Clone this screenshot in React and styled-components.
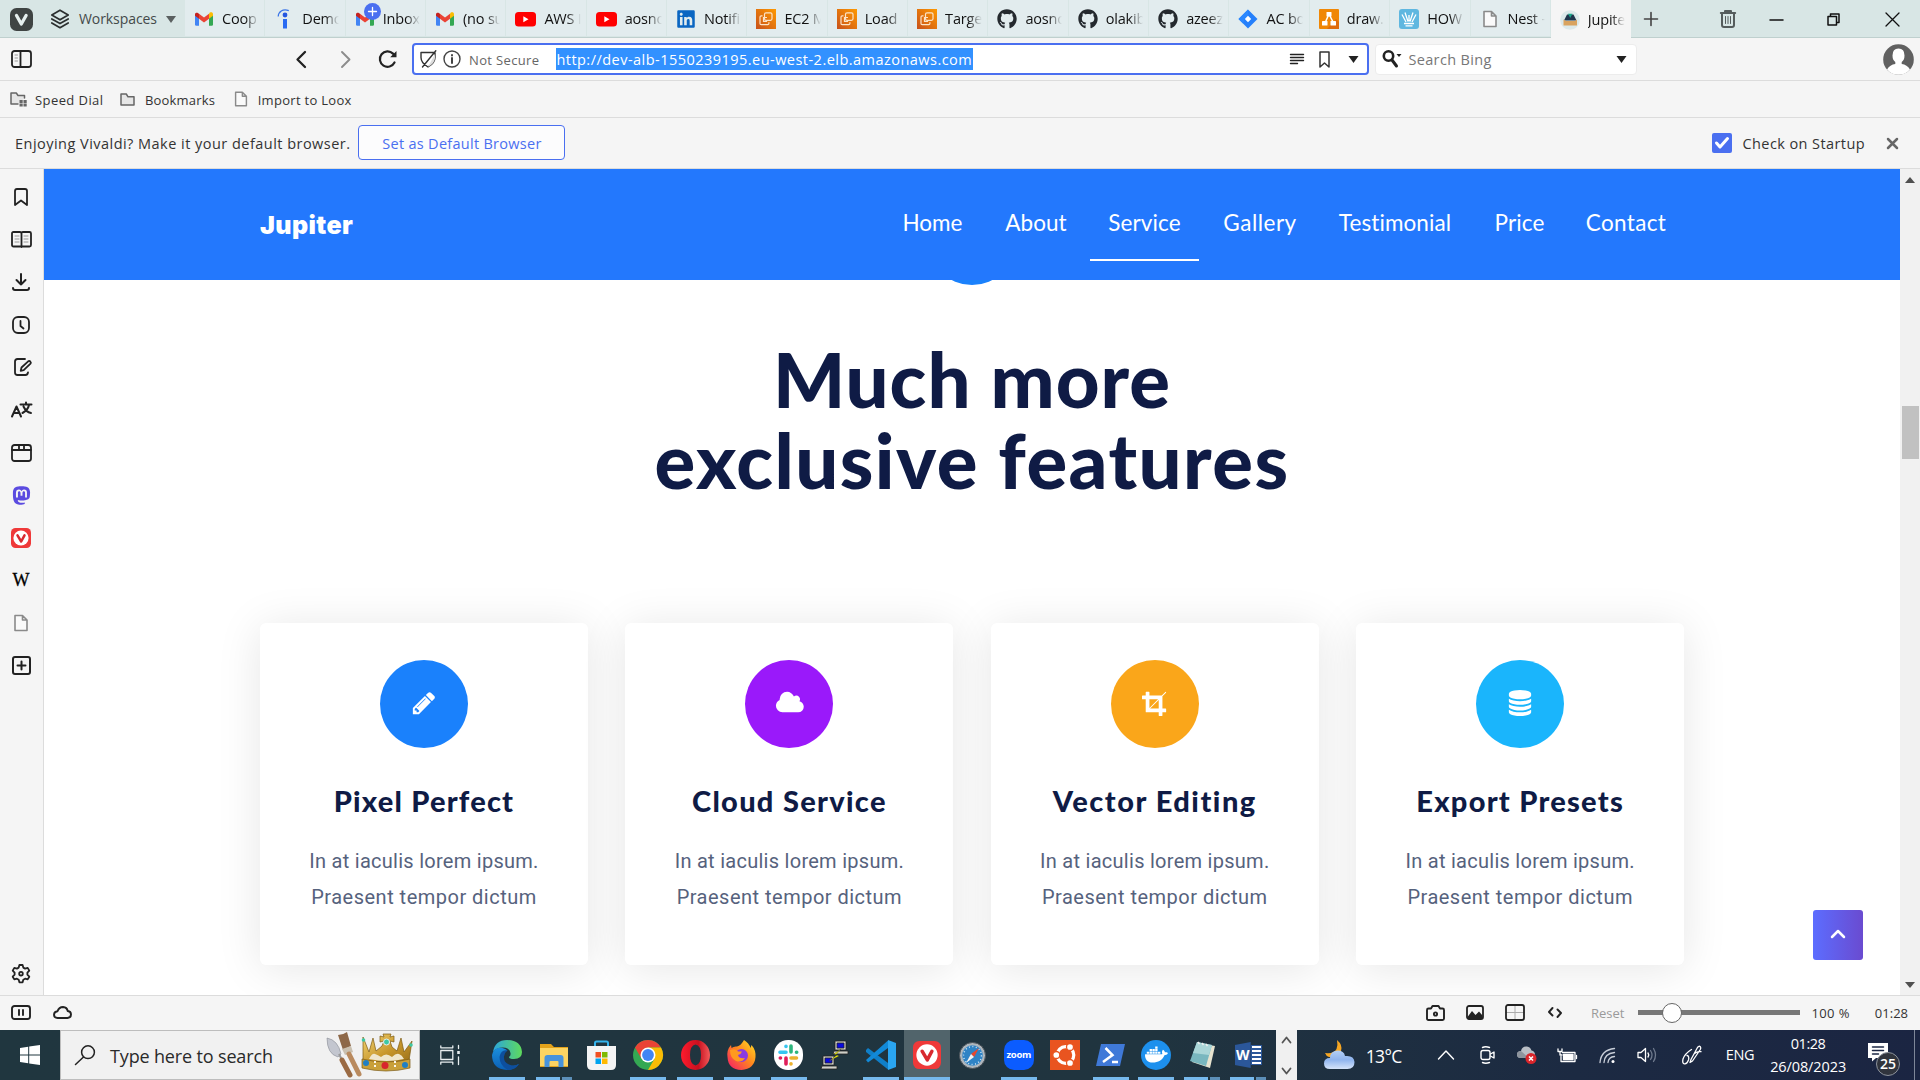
import React from 'react';
import styled, { createGlobalStyle, css } from 'styled-components';
import { FaGithub, FaDocker, FaMastodon, FaLinkedin } from 'react-icons/fa';

const UI = '"Open Sans", "Noto Sans", sans-serif';
const DISPLAY = 'Lato, "Open Sans", sans-serif';

const GlobalStyle = createGlobalStyle`
  * { box-sizing: border-box; }
  body { margin: 0; background: #f5f5f5; overflow: hidden; font-family: ${UI}; color: #2a2a2a; }
  svg { display: block; flex: none; overflow: visible; }
  h1, h2, p { margin: 0; }
`;

const Screen = styled.div`
  width: 1920px;
  height: 1080px;
  display: flex;
  flex-direction: column;
  overflow: hidden;
`;

const Label = styled.span`
  display: block;
  font-size: ${p => p.$size || 13}px;
  letter-spacing: ${p => p.$ls || 0}px;
  color: ${p => p.$color || '#333'};
  line-height: 20px;
  padding-top: ${p => p.$drop || 0}px;
  white-space: nowrap;
`;

const Svg = ({ w = 20, h, box = '0 0 20 20', stroke, sw = 1.8, children }) => (
  <svg width={w} height={h || w} viewBox={box} fill="none" stroke={stroke} strokeWidth={sw} strokeLinecap="round" strokeLinejoin="round">
    {children}
  </svg>
);

/* ---------- tab strip ---------- */
const TabStrip = styled.div`
  height: 38px;
  flex: none;
  display: flex;
  background: #d8e6e5;
  box-shadow: inset 0 -1px 0 #bfd0ce;
`;
const StripStart = styled.div`
  width: 185px;
  flex: none;
  display: flex;
  align-items: center;
  padding-left: 10px;
`;
const WorkspaceButton = styled.div`
  display: flex;
  align-items: center;
  gap: 9px;
  margin-left: 17px;
`;
const Tab = styled.div`
  width: 80.35px;
  flex: none;
  height: ${p => (p.$active ? 38 : 36)}px;
  padding: 1px 0 0 9px;
  display: flex;
  align-items: center;
  gap: 8px;
  background: ${p => (p.$active ? '#f5f5f5' : '#e2ecee')};
  border-right: 1px solid ${p => (p.$active ? '#f5f5f5' : '#d8e6e5')};
  position: relative;
`;
const TabTitle = styled.div`
  width: 37px;
  overflow: hidden;
  white-space: nowrap;
  font-size: 14.5px;
  line-height: 22px;
  letter-spacing: -0.2px;
  color: #111;
  mask-image: linear-gradient(90deg, #000 62%, transparent 100%);
`;
const TabBadge = styled.span`
  position: absolute;
  left: 18px;
  top: 3px;
  width: 17px;
  height: 17px;
  border-radius: 50%;
  background: #4a6ff0;
  display: flex;
  align-items: center;
  justify-content: center;
`;
const WindowButtons = styled.div`
  flex: 1;
  display: flex;
  align-items: center;
  padding: 0 19px 0 13px;
`;
const Push = styled.div`
  margin-left: ${p => p.$x}px;
`;

const Gmail = () => (
  <svg width="20" height="20" viewBox="0 0 20 20">
    <path d="M1 5.5v10c0 .8.5 1.2 1.2 1.2H5V8.5z" fill="#4285f4" />
    <path d="M19 5.5v10c0 .8-.5 1.2-1.2 1.2H15V8.5z" fill="#34a853" />
    <path d="M15 4.8v4.9l4-3v-1.500c0-2-2-2.400-3.200-1.600z" fill="#fbbc04" />
    <path d="M5 9.700V4.800l5 3.800 5-3.800v4.900l-5 3.800z" fill="#ea4335" />
    <path d="M1 5.200v1.500l4 3V4.800l-.8-.6C3 3.300 1 3.700 1 5.200z" fill="#c5221f" />
  </svg>
);
const Indeed = () => (
  <svg width="20" height="20" viewBox="0 0 20 20">
    <path d="M4.200 7.500C4.500 3 8.500-.6 14.800 1.600" stroke="#3b76e8" strokeWidth="1.300" fill="none" />
    <circle cx="11" cy="6" r="2.400" fill="#2557e0" />
    <path d="M9 10h4v9.500H9z" fill="#2a6bf2" />
  </svg>
);
const YouTube = () => (
  <svg width="21" height="20" viewBox="0 0 21 20">
    <rect x="0" y="3" width="21" height="14.500" rx="3.500" fill="#f00" />
    <path d="M8.300 7.200v6l5.200-3z" fill="#fff" />
  </svg>
);
const Ec2 = () => (
  <svg width="20" height="20" viewBox="0 0 20 20">
    <defs><linearGradient id="ec2" x1="0" y1="1" x2="1" y2="0"><stop stopColor="#c8511b" /><stop offset="1" stopColor="#f90" /></linearGradient></defs>
    <rect width="20" height="20" fill="url(#ec2)" />
    <rect x="8.500" y="3.800" width="7.500" height="7.500" rx="1.500" stroke="#fbe3c8" strokeWidth="1.200" fill="none" />
    <path d="M6.500 6.800H5.200q-1.200 0-1.200 1.200v6.500q0 1.200 1.200 1.200h6.500q1.200 0 1.200-1.200v-1.300M11 8.500H7.500v3.800h3.600" stroke="#fbe3c8" strokeWidth="1.200" fill="none" />
  </svg>
);
const Jira = () => (
  <svg width="20" height="20" viewBox="0 0 20 20">
    <path d="M10 .5 19.500 10 10 19.500.5 10z" fill="#2580fb" />
    <path d="M10 .5v6L6.700 10 5 14.500.5 10z" fill="#2b88ff" />
    <path d="M10 6.800 13.200 10 10 13.200 6.800 10z" fill="#fff" />
  </svg>
);
const Drawio = () => (
  <svg width="20" height="20" viewBox="0 0 20 20">
    <rect width="20" height="20" rx="1" fill="#f08705" />
    <path d="M8 20 17 10l3 3v7z" fill="#df6c0c" />
    <path d="M10 5 6 14M10 5l4.500 9" stroke="#fff" strokeWidth="1.500" />
    <rect x="7.500" y="3" width="5" height="4.500" rx=".6" fill="#fff" />
    <rect x="3" y="12" width="5.500" height="4.500" rx=".6" fill="#fff" />
    <rect x="11.500" y="12" width="5.500" height="4.500" rx=".6" fill="#fff" />
  </svg>
);
const HowTo = () => (
  <svg width="20" height="20" viewBox="0 0 20 20">
    <rect width="20" height="20" rx="3" fill="#5fb7e0" />
    <g stroke="#fff" strokeWidth="1.300" fill="none">
      <path d="M3 5.500 7 13M6 3.500l3 9M10 6v6.500M14 3.500l-3 9M17 5.500 13 13M5 14.500h10M6.500 16.800h7" />
    </g>
  </svg>
);
const PageIcon = ({ c = '#8a8a8a', s = 20 }) => (
  <Svg w={s} stroke={c} sw={1.6}><path d="M4 2.500h7.500L16 7v10.500H4zM11.500 2.500V7H16" fill="#fafafa" /></Svg>
);
const JupiterIcon = () => (
  <svg width="20" height="20" viewBox="0 0 20 20">
    <circle cx="10" cy="10" r="9.800" fill="#dce9ea" />
    <path d="M4 10.500 7 4.500h6.500l3 6z" fill="#20364d" />
    <path d="M8 3.800h4.500L10.200 8z" fill="#19a489" />
    <path d="M3.500 9.500 6 11h9l2-1.500v6H3.500z" fill="#d9a35f" />
  </svg>
);
const Git = () => <FaGithub size={20} color="#24292e" />;
const LinkedIn = () => <FaLinkedin size={20} color="#0a66c2" />;

const TABS = [
  ['Coop', Gmail], ['Demo', Indeed], ['Inbox', Gmail, true], ['(no su', Gmail], ['AWS I', YouTube], ['aosno', YouTube],
  ['Notifi', LinkedIn], ['EC2 M', Ec2], ['Load', Ec2], ['Targe', Ec2], ['aosno', Git], ['olakib', Git], ['azeez', Git],
  ['AC bo', Jira], ['draw.', Drawio], ['HOW', HowTo], ['Nest -', PageIcon], ['Jupite', JupiterIcon],
];

const Tabs = () => (
  <TabStrip>
    <StripStart>
      <svg width="23" height="23" viewBox="0 0 23 23">
        <rect width="23" height="23" rx="6.500" fill="#3f4443" />
        <path d="M6.500 7.500 11.300 16l4.800-8.500" stroke="#e6efee" strokeWidth="3.300" fill="none" strokeLinecap="round" strokeLinejoin="round" />
      </svg>
      <WorkspaceButton>
        <Svg w={20} stroke="#2b2f2f" sw={1.700}>
          <path d="M10 1.200 18.200 6 10 10.800 1.800 6zM1.800 10 10 14.600 18.200 10M1.800 14 10 18.700 18.200 14" />
        </Svg>
        <Label $size={14} $ls={-0.08} $color="#444a4a">Workspaces</Label>
        <svg width="10" height="7" viewBox="0 0 10 7"><path d="M0 0h10L5 7z" fill="#5a6060" /></svg>
      </WorkspaceButton>
    </StripStart>
    {TABS.map(([title, Icon, badge], i) => (
      <Tab key={i} $active={i === 17}>
        <Icon />
        <TabTitle>{title}</TabTitle>
        {badge && (
          <TabBadge>
            <Svg w={9} box="0 0 9 9" stroke="#fff" sw={1.300}><path d="M4.500.5v8M.5 4.500h8" /></Svg>
          </TabBadge>
        )}
      </Tab>
    ))}
    <WindowButtons>
      <Svg w={14} box="0 0 14 14" stroke="#444" sw={1.600}><path d="M7 .5v13M.5 7h13" /></Svg>
      <Push $x={62}>
        <Svg w={16} h={18} box="0 0 16 18" stroke="#555c5c" sw={1.500}>
          <path d="M.8 3h14.400M5 2.800V1h6v1.800M2 3.500V15q0 2 2 2h8q2 0 2-2V3.500" strokeWidth="2" /><path d="M5.500 6.500v7M8 6.500v7M10.500 6.500v7" strokeWidth="1" />
        </Svg>
      </Push>
      <Push $x={34}><Svg w={13} h={14} box="0 0 13 14" stroke="#111" sw={1.500}><path d="M0 8h13" /></Svg></Push>
      <Push $x={44}>
        <Svg w={13} box="0 0 13 13" stroke="#111" sw={1.500}><path d="M1 3.500h8.500V12H1zM3.500 3.500V1H12v8.500H9.500" /></Svg>
      </Push>
      <Push $x={46}><Svg w={13} box="0 0 13 13" stroke="#111" sw={1.300}><path d="m0 0 13 13M13 0 0 13" /></Svg></Push>
    </WindowButtons>
  </TabStrip>
);

/* ---------- address row ---------- */
const AddressRow = styled.div`
  height: 43px;
  flex: none;
  display: flex;
  align-items: center;
  padding: 0 6px 0 11px;
  border-bottom: 1px solid #dcdcdc;
  background: #f5f5f5;
`;
const UrlField = styled.div`
  width: 959px;
  height: 32px;
  margin-left: 14px;
  display: flex;
  align-items: center;
  background: #fff;
  border: 2px solid #4a6ff0;
  border-radius: 4px;
  padding: 0 8px 0 5px;
`;
const Url = styled.span`
  width: 417px;
  height: 22px;
  margin-left: 17px;
  background: #3291ff;
  color: #fff;
  font-size: 14.5px;
  line-height: 23px;
  letter-spacing: 0.47px;
  white-space: nowrap;
`;
const UrlActions = styled.div`
  margin-left: auto;
  display: flex;
  align-items: center;
  gap: 15px;
`;
const SearchField = styled.div`
  width: 262px;
  height: 31px;
  margin-left: 6px;
  display: flex;
  align-items: center;
  background: #fff;
  border: 1px solid #ececec;
  border-radius: 4px;
  padding: 0 9px 0 6px;
`;
const Down = ({ w = 11, h = 7, c = '#222' }) => (
  <svg width={w} height={h} viewBox="0 0 11 7"><path d="M.5 0h10L5.500 7z" fill={c} /></svg>
);

const Address = () => (
  <AddressRow>
    <Svg w={21} h={18} box="0 0 21 18" stroke="#222" sw={1.800}>
      <rect x="1" y="1" width="19" height="16" rx="2.500" /><path d="M9.500 1v16" /><path d="M4 5h2.500M4 8h2.500M4 11h2.500" stroke="#999" strokeWidth="1" />
    </Svg>
    <Push $x={264}><Svg w={10} h={17} box="0 0 10 17" stroke="#222" sw={2.300}><path d="M9 1 1.500 8.500 9 16" /></Svg></Push>
    <Push $x={35}><Svg w={10} h={17} box="0 0 10 17" stroke="#8c8c8c" sw={1.900}><path d="m1 1 7.500 7.500L1 16" /></Svg></Push>
    <Push $x={27}>
      <Svg w={20} stroke="#222" sw={2.200}><path d="M16.500 13.500A7.700 7.700 0 1 1 15 4.600l1.200 1.200" /><path d="M18.500 2v6.300h-6.300z" fill="#222" stroke="none" /></Svg>
    </Push>
    <UrlField>
      <Svg w={18} box="0 0 18 18" stroke="#333" sw={1.400}>
        <path d="M2 2.500h14v5q0 5.500-7 9.500-7-4-7-9.500zM16.800.8 3.500 17" /><path d="M16 4v4q0 5-7 9z" fill="#ddd" stroke="none" />
      </Svg>
      <Push $x={6}>
        <Svg w={18} box="0 0 18 18" stroke="#444" sw={1.400}><circle cx="9" cy="9" r="8" /><path d="M9 8v5M9 5v.4" strokeWidth="2" /></Svg>
      </Push>
      <Push $x={8}><Label $ls={0.35} $color="#666" $drop={1}>Not Secure</Label></Push>
      <Url>http://dev-alb-1550239195.eu-west-2.elb.amazonaws.com</Url>
      <UrlActions>
        <Svg w={14} h={12} box="0 0 14 12" stroke="#222" sw={1.400}><path d="M.5 1.500h13M.5 4.500h13M.5 7.500h13M.5 10.500h7" /></Svg>
        <Svg w={11} h={17} box="0 0 11 17" stroke="#333" sw={1.500}><path d="M1 1h9v15l-4.500-4L1 16z" /></Svg>
        <Push $x={3}><Down /></Push>
      </UrlActions>
    </UrlField>
    <SearchField>
      <Svg w={21} h={18} box="0 0 21 18" stroke="#222" sw={2.600}><circle cx="6.500" cy="6" r="4.700" /><path d="m10 10 4.500 6" strokeWidth="3" /><path d="M14.500 4h5L17 7z" fill="#222" stroke="none" /></Svg>
      <Push $x={5}><Label $size={14.5} $ls={0.35} $color="#777" $drop={2}>Search Bing</Label></Push>
      <UrlActions><Down /></UrlActions>
    </SearchField>
    <Push $x={246}>
      <svg width="31" height="31" viewBox="0 0 31 31">
        <circle cx="15.500" cy="15.500" r="15.300" fill="#606060" />
        <path d="M4 25.500q3-5 8.300-5.500V18q-2.800-2-2.800-6.500 0-7 6-7t6 7q0 4.500-2.800 6.500v2q5.300.500 8.300 5.500-4.500 5.300-11.500 5.300T4 25.500z" fill="#fff" />
      </svg>
    </Push>
  </AddressRow>
);

/* ---------- bookmarks & banner ---------- */
const BookmarkBar = styled.div`
  height: 37px;
  flex: none;
  display: flex;
  align-items: center;
  padding-left: 10px;
  border-bottom: 1px solid #dcdcdc;
  background: #f5f5f5;
`;
const Bookmark = styled.div`
  display: flex;
  align-items: center;
  gap: ${p => p.$gap}px;
  margin-right: 16.500px;
`;
const Banner = styled.div`
  height: 51px;
  flex: none;
  display: flex;
  align-items: center;
  padding: 0 22px 0 15px;
  border-bottom: 1px solid #dcdcdc;
  background: #f5f5f5;
`;
const DefaultButton = styled.div`
  width: 207px;
  height: 35px;
  margin-left: 8px;
  margin-top: -1px;
  border: 1px solid #4a6ff0;
  border-radius: 4px;
  background: #fcfcfd;
  display: flex;
  align-items: center;
  justify-content: center;
`;
const StartupOption = styled.div`
  margin-left: auto;
  display: flex;
  align-items: center;
  gap: 11px;
`;
const CheckBox = styled.div`
  width: 20px;
  height: 20px;
  border-radius: 2px;
  background: #4a6ff0;
  display: flex;
  align-items: center;
  justify-content: center;
`;
const folder = 'M1 3.500V13h13V4.800H8L6.300 2H1z';

const Bars = () => (
  <>
    <BookmarkBar>
      <Bookmark $gap={8}>
        <Svg w={17} h={16} box="0 0 17 16" stroke="#666" sw={1.500}><path d="M8 13H1V2h5.300L8 4.500h6.500V7" fill="#e6e6e6" /><path d="M11 10.500h.2M15 10.500h.2M11 14h.2M15 14h.2" strokeWidth="3" strokeLinecap="square" /></Svg>
        <Label $ls={0.42} $drop={1}>Speed Dial</Label>
      </Bookmark>
      <Bookmark $gap={9}>
        <Svg w={16} h={15} box="0 0 16 15" stroke="#666" sw={1.500}><path d={folder} fill="#e6e6e6" /></Svg>
        <Label $ls={0.19} $drop={1}>Bookmarks</Label>
      </Bookmark>
      <Bookmark $gap={8}><PageIcon s={18} /><Label $ls={0.3} $drop={1}>Import to Loox</Label></Bookmark>
    </BookmarkBar>
    <Banner>
      <Label $size={14.5} $ls={0.47} $drop={2}>Enjoying Vivaldi? Make it your default browser.</Label>
      <DefaultButton><Label $size={14.5} $ls={0.28} $color="#4a6ff0" $drop={2}>Set as Default Browser</Label></DefaultButton>
      <StartupOption>
        <CheckBox><Svg w={14} h={12} box="0 0 14 12" stroke="#fff" sw={3}><path d="m1.500 6 3.500 4L12.500 1.500" /></Svg></CheckBox>
        <Label $size={14.5} $ls={0.41} $drop={2}>Check on Startup</Label>
        <Push $x={11}><Svg w={11} box="0 0 11 11" stroke="#666" sw={2.500}><path d="m1 1 9 9M10 1l-9 9" /></Svg></Push>
      </StartupOption>
    </Banner>
  </>
);

/* ---------- side panel ---------- */
const Middle = styled.div`
  height: 827px;
  flex: none;
  display: flex;
  border-bottom: 1px solid #dcdcdc;
`;
const Panel = styled.div`
  width: 44px;
  flex: none;
  background: #f5f5f5;
  border-right: 1px solid #dcdcdc;
  display: flex;
  flex-direction: column;
  align-items: center;
  padding: 7px 1px 0 0;
`;
const PanelSlot = styled.div`
  height: 42.600px;
  display: flex;
  align-items: center;
  margin-top: ${p => (p.$last ? 'auto' : '0')};
`;
const WikiMark = styled.span`
  font: 18px "Liberation Serif", serif;
  color: #000;
  -webkit-text-stroke: 0.3px #000;
`;
const VivaldiLogo = ({ s }) => (
  <svg width={s} height={s} viewBox="0 0 20 20">
    <rect width="20" height="20" rx="4.500" fill="#ef3939" />
    <circle cx="10" cy="10" r="7.600" fill="#fff" />
    <path d="m6.500 7.300 3.700 6.200 3.300-6.200" stroke="#d8292f" strokeWidth="2.500" fill="none" strokeLinecap="round" strokeLinejoin="round" />
  </svg>
);
const K = '#222';
const PANEL = [
  <Svg w={14} h={18} box="0 0 14 18" stroke={K}><path d="M1 17V3q0-2 2-2h8q2 0 2 2v14l-6-4.500z" /></Svg>,
  <Svg w={21} h={17} box="0 0 21 17" stroke={K}><path d="M1 2.500Q1 1 2.500 1h6.500q1.500 0 1.500 1.500Q10.500 1 12 1h6.500Q20 1 20 2.500V14q0 1.500-1.500 1.500H2.500Q1 15.500 1 14zM10.500 2.500V16" /><path d="M4 5h4M4 8h4M4 11h4M13 5h4M13 8h4M13 11h4" stroke="#999" strokeWidth="1" /></Svg>,
  <Svg w={18} h={18} box="0 0 18 18" stroke={K} sw={2}><path d="M9 1v10.500M4.500 7 9 11.500 13.500 7M1 15q0 2 2 2h12q2 0 2-2" /></Svg>,
  <Svg w={18} box="0 0 18 18" stroke={K}><rect x="1" y="1" width="16" height="16" rx="5" /><path d="M8.500 5v5l3 2.500" /></Svg>,
  <Push $x={4}><Svg w={18} h={19} box="0 0 18 19" stroke={K}><path d="M11 1H3.500Q1 1 1 3.500v11Q1 17 3.500 17h8q2 0 2.500-2.500" /><path d="m7.500 9.500 6.700-6.200q1-.8 2.100.2 1.100 1.200.2 2.200l-6.800 6.500-3 .7z" /></Svg></Push>,
  <Svg w={21} h={16} box="0 0 21 16" stroke={K} sw={2}><path d="M1 14.500 5.500 4.500l4.500 10M2.800 11h5.500M9.500 2.500h11M15 .5v2M18 3q-1 5-6.500 8M12.500 4.500Q15 10 20 11" /></Svg>,
  <Svg w={21} h={18} box="0 0 21 18" stroke={K}><rect x="1" y="1" width="19" height="16" rx="2.500" /><path d="M1 6h19M8 1.500V5M13 1.500V5" /></Svg>,
  <FaMastodon size={21} color="#5b4be0" />,
  <VivaldiLogo s={20} />,
  <WikiMark>W</WikiMark>,
  <PageIcon s={20} />,
  <Svg w={19} box="0 0 19 19" stroke={K} sw={2}><rect x="1" y="1" width="17" height="17" rx="2" /><path d="M9.500 5.500v8M5.500 9.500h8" /></Svg>,
];

const SidePanel = () => (
  <Panel>
    {PANEL.map((icon, i) => <PanelSlot key={i}>{icon}</PanelSlot>)}
    <PanelSlot $last>
      <Svg w={20} stroke={K}>
        <path d="M8.400 1h3.200l.7 2.600 1.800 1 2.600-.7 1.600 2.700-1.900 2v2.100l1.900 2-1.600 2.700-2.600-.7-1.800 1-.7 2.600H8.400l-.7-2.600-1.800-1-2.600.7-1.600-2.700 1.900-2V8.600l-1.900-2 1.600-2.700 2.600.7 1.800-1z" />
        <circle cx="10" cy="9.700" r="1.800" />
      </Svg>
    </PanelSlot>
  </Panel>
);

/* ---------- web page ---------- */
const Page = styled.main`
  width: 1856px;
  flex: none;
  background: #fff;
  display: flex;
  flex-direction: column;
  overflow: hidden;
  position: relative;
`;
const SiteHeader = styled.header`
  height: 111px;
  flex: none;
  background: #2378fd;
  display: flex;
  align-items: center;
  padding: 0 218px 0 216px;
  position: relative;
  z-index: 1;
`;
const Brand = styled.div`
  font: 900 25px Inter, Roboto, sans-serif;
  letter-spacing: 0.4px;
  color: #fff;
`;
const Nav = styled.nav`
  margin-left: auto;
  height: 92px;
  align-self: flex-start;
  display: flex;
`;
const NavItem = styled.a`
  width: ${p => p.$w}px;
  display: flex;
  align-items: center;
  justify-content: center;
  padding-top: 16px;
  border-bottom: 2px solid ${p => (p.$active ? '#fff' : 'transparent')};
  font: 22.500px ${DISPLAY};
  letter-spacing: ${p => p.$ls}px;
  color: #fff;
`;
const NAV = [['Home', 99, 0.0], ['About', 108, 0.05], ['Service', 109, 0.1], ['Gallery', 122, 0.5], ['Testimonial', 148, 0.1], ['Price', 101, 0.1], ['Contact', 112, 0.35]];
const Orb = styled.div`
  width: 88px;
  height: 88px;
  flex: none;
  border-radius: 50%;
  background: #1a81fc;
  margin: -83px auto 0;
`;
const Heading = styled.h1`
  margin-top: 53px;
  text-align: center;
  font: 900 76px/81px ${DISPLAY};
  color: #0f1b45;
`;
const HeadingLine = styled.span`
  display: block;
  letter-spacing: ${p => p.$ls}px;
`;
const Cards = styled.section`
  display: grid;
  grid-template-columns: repeat(4, 328px);
  column-gap: 37.400px;
  margin: 123px 0 0 216px;
`;
const Card = styled.article`
  height: 342px;
  border-radius: 6px;
  background: #fff;
  box-shadow: 0 4px 45px rgba(0, 0, 0, 0.1);
  display: flex;
  flex-direction: column;
  align-items: center;
  padding-top: 37px;
`;
const Round = styled.div`
  width: 88px;
  height: 88px;
  border-radius: 50%;
  background: ${p => p.$bg};
  display: flex;
  align-items: center;
  justify-content: center;
  padding-bottom: 2px;
`;
const CardTitle = styled.h2`
  margin-top: 35px;
  font: 900 29px/36px ${DISPLAY};
  letter-spacing: ${p => p.$ls}px;
  color: #0f1b45;
  white-space: nowrap;
`;
const CardText = styled.p`
  font: 20px/36px Roboto, sans-serif;
  letter-spacing: ${p => p.$ls}px;
  color: #56627d;
  margin-top: ${p => p.$top || 0}px;
  white-space: nowrap;
`;
const CARDS = [
  ['Pixel Perfect', 1.2, '#1a81fc', '0 0 1792 1792', 26, 'M491 1536l91-91-235-235-91 91v107h128v128h107zm523-928q0-22-22-22-10 0-17 7l-542 542q-7 7-7 17 0 22 22 22 10 0 17-7l542-542q7-7 7-17zm-54-192l416 416-832 832h-416v-416zm683 96q0 53-37 90l-166 166-416-416 166-165q36-38 90-38 53 0 91 38l235 234q37 39 37 91z'],
  ['Cloud Service', 1.3, '#9a19fa', '0 0 2048 1792', 29.7, 'M1984 1152q0 159-112.500 271.500t-271.500 112.500h-1088q-185 0-316.500-131.500t-131.500-316.500q0-132 71-241.500t187-163.500q-2-28-2-43 0-212 150-362t362-150q158 0 286.500 88t187.500 230q70-62 166-62 106 0 181 75t75 181q0 75-41 138 129 30 213 134.500t84 239.500z'],
  ['Vector Editing', 1.5, '#faa61a', '0 0 1792 1792', 26, 'M557 1280h595v-595zm-45-45l595-595h-595v595zm1152 77v192q0 14-9 23t-23 9h-224v224q0 14-9 23t-23 9h-192q-14 0-23-9t-9-23v-224h-864q-14 0-23-9t-9-23v-864h-224q-14 0-23-9t-9-23v-192q0-14 9-23t23-9h224v-224q0-14 9-23t23-9h192q14 0 23 9t9 23v224h851l246-247q10-9 23-9t23 9q9 10 9 23t-9 23l-247 246v851h224q14 0 23 9t9 23z'],
  ['Export Presets', 1.25, '#1ab5fc', '0 0 1792 1792', 26, 'M896 768q237 0 443-43t325-127v170q0 69-103 128t-280 93.500-385 34.500-385-34.500-280-93.500-103-128v-170q119 84 325 127t443 43zm0 768q237 0 443-43t325-127v170q0 69-103 128t-280 93.500-385 34.500-385-34.500-280-93.500-103-128v-170q119 84 325 127t443 43zm0-384q237 0 443-43t325-127v170q0 69-103 128t-280 93.500-385 34.500-385-34.500-280-93.500-103-128v-170q119 84 325 127t443 43zm0-1152q208 0 385 34.500t280 93.500 103 128v128q0 69-103 128t-280 93.500-385 34.500-385-34.500-280-93.500-103-128v-128q0-69 103-128t280-93.500 385-34.500z'],
];
const ToTop = styled.div`
  position: absolute;
  right: 37px;
  bottom: 35px;
  width: 50px;
  height: 50px;
  border-radius: 3px;
  background: linear-gradient(90deg, #5c6dff, #6a4bd0);
  display: flex;
  align-items: center;
  justify-content: center;
  padding-bottom: 4px;
`;
const ScrollTrack = styled.div`
  width: 20px;
  flex: none;
  background: #f1f1f1;
  display: flex;
  flex-direction: column;
  align-items: center;
  padding: 8px 0 7px;
`;
const ScrollThumb = styled.div`
  width: 17px;
  height: 53px;
  margin: 223px 0 auto;
  background: #c1c1c1;
`;

const WebPage = () => (
  <Page>
    <SiteHeader>
      <Brand>Jupiter</Brand>
      <Nav>{NAV.map(([t, w, ls]) => <NavItem key={t} $w={w} $ls={ls} $active={t === 'Service'}>{t}</NavItem>)}</Nav>
    </SiteHeader>
    <Orb />
    <Heading>
      <HeadingLine $ls={1}>Much more</HeadingLine>
      <HeadingLine $ls={1.45}>exclusive features</HeadingLine>
    </Heading>
    <Cards>
      {CARDS.map(([title, ls, bg, box, w, d]) => (
        <Card key={title}>
          <Round $bg={bg}><svg width={w} height="26" viewBox={box}><path d={d} fill="#fff" /></svg></Round>
          <CardTitle $ls={ls}>{title}</CardTitle>
          <CardText $top={24} $ls={0.27}>In at iaculis lorem ipsum.</CardText>
          <CardText $ls={0.49}>Praesent tempor dictum</CardText>
        </Card>
      ))}
    </Cards>
    <ToTop><Svg w={14} h={9} box="0 0 14 9" stroke="#fff" sw={2.500}><path d="m1 8 6-6 6 6" /></Svg></ToTop>
  </Page>
);

/* ---------- status bar ---------- */
const StatusBar = styled.div`
  height: 34px;
  flex: none;
  display: flex;
  align-items: center;
  padding: 0 12px 1px 11px;
  background: #f5f5f5;
`;
const StatusRight = styled.div`
  margin-left: auto;
  display: flex;
  align-items: center;
`;
const Slider = styled.div`
  width: 162px;
  height: 20px;
  margin: 0 11px 0 14px;
  padding-left: 24px;
  display: flex;
  align-items: center;
  background: linear-gradient(#777, #777) center / 100% 5px no-repeat;
  border-radius: 3px;
`;
const Knob = styled.div`
  width: 20px;
  height: 20px;
  border-radius: 50%;
  border: 1px solid #666;
  background: #fff;
`;
const Status = () => (
  <StatusBar>
    <Svg w={20} h={15} box="0 0 20 15" stroke={K} sw={1.900}><rect x="1" y="1" width="18" height="13" rx="2.500" /><path d="M8 5v5M12 5v5" /></Svg>
    <Push $x={22}><Svg w={19} h={13} box="0 0 19 13" stroke={K} sw={1.900}><path d="M4.500 12Q1 12 1 8.700 1.200 5.500 4.500 5.200 6 1 10 1q4 .2 4.700 4 3.300.4 3.300 3.500T14.500 12z" /></Svg></Push>
    <StatusRight>
      <Svg w={19} h={16} box="0 0 19 16" stroke={K} sw={1.900}><path d="M1 5q0-1.500 1.500-1.500H5L6.500 1h6L14 3.500h2.500Q18 3.500 18 5v8.500q0 1.500-1.500 1.500h-14Q1 15 1 13.500z" /><circle cx="9.500" cy="9" r="1.600" /></Svg>
      <Push $x={21}><Svg w={18} h={15} box="0 0 18 15" stroke={K}><rect x="1" y="1" width="16" height="13" rx="2" /><path d="M1.500 12 6 6l3.500 4L13 6.500l3.500 4V13H2z" fill={K} stroke="none" /></Svg></Push>
      <Push $x={21}><Svg w={20} h={17} box="0 0 20 17" stroke={K}><path d="M10 1v15M1 8.500h18" stroke="#aaa" strokeWidth="1" /><rect x="1" y="1" width="18" height="15" rx="2" /></Svg></Push>
      <Push $x={23}><Svg w={14} h={11} box="0 0 14 11" stroke={K} sw={1.900}><path d="M4.500 1 1 5l3.500 3.500M9.500 2.500 13 6l-3.500 4" /></Svg></Push>
      <Push $x={29}><Label $color="#9a9a9a">Reset</Label></Push>
      <Slider><Knob /></Slider>
      <Label $ls={0.39}>100 %</Label>
      <Push $x={25}><Label>01:28</Label></Push>
    </StatusRight>
  </StatusBar>
);

/* ---------- taskbar ---------- */
const TaskBar = styled.div`
  height: 50px;
  flex: none;
  display: flex;
  background: linear-gradient(90deg, #20363f 0%, #20343f 60%, #1c2a42 82%, #1b2542 100%);
`;
const StartCell = styled.div`
  width: 60px;
  flex: none;
  display: flex;
  align-items: center;
  justify-content: center;
`;
const SearchBox = styled.div`
  width: 360px;
  flex: none;
  display: flex;
  align-items: center;
  padding-left: 14px;
  background: #f1f1f1;
  border: 1px solid #bdbdbd;
`;
const TaskViewCell = styled(StartCell)`
  width: 64px;
  padding-right: 5px;
`;
const AppCell = styled.div`
  width: ${p => p.$w}px;
  flex: none;
  display: flex;
  flex-direction: column;
  align-items: center;
  justify-content: flex-end;
  gap: 5px;
  ${p => p.$active && css`background: #51646b;`}
`;
const IconBox = styled.div`
  height: 34px;
  display: flex;
  align-items: center;
`;
const RunBar = styled.div`
  height: 3px;
  width: ${p => (p.$wide ? 45.900 : 36)}px;
  background: ${p => (p.$multi ? 'linear-gradient(90deg,#76b9ed 68%,#20343f 68%,#20343f 71%,#5c8fb8 71%)' : '#76b9ed')};
  visibility: ${p => (p.$on ? 'visible' : 'hidden')};
`;
const ScrollButtons = styled.div`
  width: 21px;
  flex: none;
  margin-left: 4.500px;
  background: #f0f0f0;
  display: flex;
  flex-direction: column;
  align-items: center;
  justify-content: space-between;
  padding: 7px 0 6px;
`;
const Tray = styled.div`
  flex: 1;
  display: flex;
  align-items: center;
  padding-left: 27px;
`;
const Clock = styled.div`
  width: 76px;
  margin-left: 16px;
  display: flex;
  flex-direction: column;
  align-items: center;
  gap: 3px;
`;
const Notice = styled.div`
  width: 33px;
  height: 36px;
  margin-left: 22px;
  margin-top: 8px;
  position: relative;
`;
const Count = styled.span`
  position: absolute;
  left: 8px;
  top: 11px;
  width: 24px;
  height: 24px;
  border-radius: 50%;
  border: 1px solid #8c929c;
  background: #30343d;
  color: #fff;
  font: 600 14px/21px ${UI};
  text-align: center;
`;
const ShowDesktop = styled.div`
  width: 6px;
  margin-left: auto;
  align-self: stretch;
  border-left: 1px solid #7e8798;
`;
const ZoomText = styled.span`
  font: bold 9.500px ${UI};
  letter-spacing: -0.3px;
  color: #fff;
`;
const ZoomTile = styled.div`
  width: 30px;
  height: 30px;
  border-radius: 10px;
  background: #0b5cff;
  display: flex;
  align-items: center;
  justify-content: center;
  padding-bottom: 2px;
`;
const DockerTile = styled(ZoomTile)`
  border-radius: 50%;
  background: #1d90ed;
`;

const Edge = () => (
  <svg width="30" height="30" viewBox="0 0 30 30">
    <defs>
      <linearGradient id="eg1" x1="0" y1="0" x2="1" y2="0"><stop stopColor="#2ba5dc" /><stop offset="1" stopColor="#5fdb5c" /></linearGradient>
      <linearGradient id="eg2" x1="0" y1="0" x2="0" y2="1"><stop stopColor="#1b8fdc" /><stop offset="1" stopColor="#0b5fb5" /></linearGradient>
    </defs>
    <path d="M1 12Q3 0 15 0q14 0 15 12 0 7-8 7-5 0-5-2 2-1 1.500-4Q17.500 7.500 11 7.500 4 7.500 1 12z" fill="url(#eg1)" />
    <path d="M1 12Q4 7 10.500 8q3 .5 5 2.500-5 1-5 7 .5 8 9 8.500 5 0 7.500-2-5 6-12 6Q0 29 0 15z" fill="url(#eg2)" />
    <path d="M15.500 10.500Q9 9 7.500 17q0 8 8 13 8 0 11.500-6-5 2.500-10 .5-5.500-2.500-5-8 .5-4 3.500-6z" fill="#0d4f9e" />
  </svg>
);
const Explorer = () => (
  <svg width="28" height="26" viewBox="0 0 28 26">
    <path d="M0 2h11l3 3h14v20H0z" fill="#e3a21a" /><path d="M0 6h28v18H0z" fill="#fcd462" />
    <path d="M4.500 25V16q0-3 3-3h13q3 0 3 3v9h-5v-5q0-1-1-1h-7q-1 0-1 1v5z" fill="#4793dc" />
  </svg>
);
const Store = () => (
  <svg width="29" height="29" viewBox="0 0 29 29">
    <path d="M8 7V2q0-1.500 1.500-1.500h10Q21 .5 21 2v5" stroke="#34b3ec" strokeWidth="2" fill="none" />
    <path d="M0 5h29v19q0 5-5 5H5q-5 0-5-5z" fill="#f4f4f4" />
    <path d="M8.500 11h5.500v5.500H8.500z" fill="#f25022" /><path d="M15 11h5.500v5.500H15z" fill="#7fba00" />
    <path d="M8.500 17.500h5.500V23H8.500z" fill="#00a4ef" /><path d="M15 17.500h5.500V23H15z" fill="#ffb900" />
  </svg>
);
const Chrome = () => (
  <svg width="30" height="30" viewBox="0 0 30 30">
    <circle cx="15" cy="15" r="15" fill="#34a853" />
    <path d="M2 7.500A15 15 0 0 1 28 7.500H15L8.500 18.700z" fill="#ea4335" />
    <path d="M28 7.500A15 15 0 0 1 15 30l6.500-11.300L15 7.500z" fill="#fbbc05" />
    <circle cx="15" cy="15" r="7.500" fill="#fff" /><circle cx="15" cy="15" r="5.900" fill="#4285f4" />
  </svg>
);
const Opera = () => (
  <svg width="29" height="30" viewBox="0 0 29 30">
    <defs><linearGradient id="op"><stop stopColor="#ff1b2d" /><stop offset=".6" stopColor="#c8101f" /><stop offset="1" stopColor="#f35a5a" /></linearGradient></defs>
    <path fillRule="evenodd" d="M14.500 0a14.500 15 0 1 1 0 30 14.500 15 0 1 1 0-30zm0 4.500q-5.500 1-5.500 10.500t5.500 10.500q5.500-1 5.500-10.500T14.500 4.500z" fill="url(#op)" />
  </svg>
);
const Firefox = () => (
  <svg width="29" height="30" viewBox="0 0 29 30">
    <defs><linearGradient id="ff" x1="1" y1="0" x2="0" y2="1"><stop stopColor="#ffe226" /><stop offset=".45" stopColor="#ff8a1d" /><stop offset="1" stopColor="#f5156c" /></linearGradient></defs>
    <path d="M17 0q5 3 6.500 8l1-3q4.500 5 4 12-1 12-14 13Q1 29.500.5 17-.5 10 4 5l.5 3Q7 6 10 6.500q4-1 7-6.500z" fill="url(#ff)" />
    <circle cx="14.500" cy="15.500" r="6.500" fill="#8a3ae0" />
    <path d="M3 10q5-2 8 1.500h4q-1 3-4 3.500 1 4 7 3-3 5-9 3Q3 18 3 10z" fill="#ff9a1f" />
  </svg>
);
const Slack = () => (
  <svg width="29" height="30" viewBox="0 0 29 30">
    <rect width="29" height="30" rx="14" fill="#fff" />
    <g strokeWidth="3.600" strokeLinecap="round" fill="none">
      <path d="M12 6.200v.2M6 12.200h6" stroke="#36c5f0" /><path d="M17 6v6M22.500 12.200h.2" stroke="#2eb67d" />
      <path d="M17 18h5.500M17 23.700v.2" stroke="#ecb22e" /><path d="M12 18v6M6.300 18h.2" stroke="#e01e5a" />
    </g>
  </svg>
);
const Putty = () => (
  <svg width="28" height="30" viewBox="0 0 28 30">
    <g stroke="#222" strokeWidth=".8"><path d="M14 1h11v9H14zM13 11h14v3H12zM2 16h11v9H2zM1 26h15v3H0z" fill="#cfcfc8" /><path d="M16 3h7v5h-7zM4 18h7v5H4z" fill="#0a0ae0" /></g>
    <path d="m20 9-7 5 3 1-8 6 10-5-3-1.500z" fill="#ff0" stroke="#333" strokeWidth=".4" />
  </svg>
);
const VsCode = () => (
  <svg width="30" height="30" viewBox="0 0 30 30">
    <path d="M0 10 2 8l20 15v6.500L0 12z" fill="#0f7fc9" /><path d="M0 20 22 .5V8L2 22.500z" fill="#1189d8" />
    <path d="m22 0 8 3v24l-8 3z" fill="#2aa6f2" />
  </svg>
);
const Safari = () => (
  <svg width="27" height="27" viewBox="0 0 27 27">
    <circle cx="13.500" cy="13.500" r="13" fill="#aeb6bc" stroke="#4a5258" /><circle cx="13.500" cy="13.500" r="10.300" fill="#2f83c5" />
    <circle cx="13.500" cy="13.500" r="9" fill="none" stroke="#cfe6f5" strokeWidth="1.500" strokeDasharray="1 2.500" />
    <path d="m20 6-5 9-3-3z" fill="#e8472c" /><path d="m7 21 5-9 3 3z" fill="#f2f2f2" />
  </svg>
);
const Ubuntu = () => (
  <svg width="30" height="30" viewBox="0 0 30 30">
    <rect width="30" height="30" fill="#e95420" />
    <circle cx="15.500" cy="15" r="8.300" fill="none" stroke="#fff" strokeWidth="3.200" />
    <g fill="#fff" stroke="#e95420" strokeWidth="1.300"><circle cx="6.300" cy="15" r="3.500" /><circle cx="20" cy="7" r="3.500" /><circle cx="20" cy="23" r="3.500" /></g>
  </svg>
);
const PowerShell = () => (
  <svg width="29" height="22" viewBox="0 0 29 22">
    <path d="M5 0h24l-5 22H0z" fill="#3f79d8" /><path d="m9.500 4 7 7L7 18M16 18h6" stroke="#fff" strokeWidth="2.500" fill="none" />
  </svg>
);
const Notepad = () => (
  <svg width="27" height="28" viewBox="0 0 27 28">
    <path d="m9 2 17 3-5 22L3 21z" fill="#e7e3cf" /><path d="m8 1 15 3-6 21L1 20z" fill="#79b7bf" /><path d="m8 1 15 3-3 10L4 12z" fill="#aad6d8" />
    <path d="m9 1 1.500 2M13 2l1.500 2M17 3l1.500 2" stroke="#eee" strokeWidth="1.500" />
  </svg>
);
const WordTile = styled.div`
  width: 27px;
  height: 26px;
  display: grid;
  grid-template-columns: 16px 11px;
  align-items: center;
`;
const WordFront = styled.div`
  height: 26px;
  background: #2b579a;
  clip-path: polygon(0 12%, 100% 0, 100% 100%, 0 88%);
  color: #fff;
  font: bold 14px/26px ${UI};
  text-align: center;
`;
const WordPage = styled.div`
  height: 20px;
  border: 1.500px solid #2b579a;
  background: repeating-linear-gradient(#fff 0 2px, #2b579a 2px 4px);
`;
const Word = () => <WordTile><WordFront>W</WordFront><WordPage /></WordTile>;

const APPS = [
  [<Edge />, 1], [<Explorer />, 2], [<Store />, 0], [<Chrome />, 1], [<Opera />, 1], [<Firefox />, 1], [<Slack />, 1], [<Putty />, 0],
  [<VsCode />, 1], [<VivaldiLogo s={28} />, 3], [<Safari />, 0], [<ZoomTile><ZoomText>zoom</ZoomText></ZoomTile>, 1], [<Ubuntu />, 0],
  [<PowerShell />, 1], [<DockerTile><FaDocker size={23} color="#fff" /></DockerTile>, 1], [<Notepad />, 2], [<Word />, 2],
];

const Crown = () => (
  <svg width="88" height="46" viewBox="0 0 88 46">
    <defs><linearGradient id="gold" x1="0" y1="0" x2="1" y2="1"><stop stopColor="#f3d676" /><stop offset=".5" stopColor="#c8972c" /><stop offset="1" stopColor="#8d6514" /></linearGradient></defs>
    <path d="M1 6Q12 8 15 22l-3 3Q1 22 1 6z" fill="#c3c6cf" stroke="#8a8d96" strokeWidth=".6" />
    <path d="m13 22 3 6" stroke="#999" strokeWidth="2" /><path d="m16 28 8 15" stroke="#9a6a43" strokeWidth="5" strokeLinecap="round" />
    <path d="M12 3q5 0 9-3l4 14-8 4z" fill="#8d6848" /><path d="m16 17 9-3 2 6-8 3z" fill="#c9c0b0" /><path d="m23 22 10 20" stroke="#b98a5e" strokeWidth="5" strokeLinecap="round" />
    <path fillRule="evenodd" d="M37 36Q37 18 37 5l6 15 4-14 3 13 6-5 2-5-4 1V4l4 1-1-3h8l-1 3 4-1v6l-4-1 2 6 5 4 4-13 3 14 8-11-4 26q-22 5-45-1z" fill="url(#gold)" stroke="#7d5a12" strokeWidth=".7" />
    <path d="M43 27q3-6 6-5t6 3q5-5 11 0 4-4 7-3t5 5q-17 4-35 0z" fill="#efe6cc" />
    <path d="M36 27q25 6 48 0v9q-24 6-48 0z" fill="#c9a03a" stroke="#7d5a12" strokeWidth=".7" />
    <circle cx="60.500" cy="10" r="3" fill="#3cc9a4" stroke="#eee" /><circle cx="59" cy="33.500" r="3.500" fill="#d8262c" /><circle cx="40" cy="31" r="3" fill="#1f7fc4" /><circle cx="79" cy="33" r="3" fill="#1f7fc4" />
    <path d="M49 29v7M69 29v7" stroke="#fff" strokeWidth="1.800" strokeDasharray="2 2" /><circle cx="37.500" cy="8" r="1.800" fill="#3cc9a4" /><circle cx="85" cy="13" r="1.800" fill="#3cc9a4" />
  </svg>
);

const Task = () => (
  <TaskBar>
    <StartCell>
      <svg width="20" height="20" viewBox="0 0 20 20" fill="#fff"><path d="M0 2.900 8.200 1.700v7.800H0zM9.200 1.600 20 0v9.500H9.200zM0 10.500h8.200v7.800L0 17.100zM9.200 10.500H20V20L9.200 18.400z" /></svg>
    </StartCell>
    <SearchBox>
      <Svg w={21} h={20} box="0 0 21 20" stroke="#222" sw={1.500}><circle cx="13" cy="7.200" r="6.400" /><path d="m8.500 12-8 7.500" /></Svg>
      <Push $x={14}><Label $size={18} $ls={-0.15} $color="#2a2a2a" $drop={1}>Type here to search</Label></Push>
      <Push $x={53}><Crown /></Push>
    </SearchBox>
    <TaskViewCell>
      <Svg w={20} box="0 0 20 20" stroke="#e8eef0" sw={1.300}><path d="M.8 5.500h12v9h-12zM.8.8v2h12v-2M.8 19.200v-2h12v2M18.500.5v3M18.500 12v7.500" /><path d="M18.500 6v3" strokeWidth="2.600" strokeLinecap="butt" /></Svg>
    </TaskViewCell>
    {APPS.map(([icon, state], i) => (
      <AppCell key={i} $active={state === 3} $w={i < 7 ? 46.9 : 45.9}>
        <IconBox>{icon}</IconBox>
        <RunBar $on={state > 0} $multi={state === 2} $wide={state === 3} />
      </AppCell>
    ))}
    <ScrollButtons>
      <Svg w={9} h={6} box="0 0 9 6" stroke="#555" sw={1.800}><path d="m.5 5.500 4-5 4 5" /></Svg>
      <Svg w={9} h={6} box="0 0 9 6" stroke="#555" sw={1.800}><path d="m.5.5 4 5 4-5" /></Svg>
    </ScrollButtons>
    <Tray>
      <svg width="31" height="30" viewBox="0 0 31 30">
        <defs><linearGradient id="cl" x1="0" y1="0" x2="0" y2="1"><stop stopColor="#b5d0f5" /><stop offset=".5" stopColor="#8fb4ee" /><stop offset="1" stopColor="#d5e4fa" /></linearGradient></defs>
        <path d="M13 0q6 5 4 11-4 7-12 6-3-1-4-4 9 1 11.500-4 1.500-4 .5-9z" fill="#f6a623" />
        <path d="M6 29q-6 0-6-5.500T6 18q0-7 7.500-7.500Q20 10.500 21 16q9-1 9.500 6 0 7-7 7z" fill="url(#cl)" />
      </svg>
      <Push $x={11}><Label $size={17.5} $ls={-0.6} $color="#fff" $drop={1}>13°C</Label></Push>
      <Push $x={36}><Svg w={16} h={10} box="0 0 16 10" stroke="#fff" sw={1.400}><path d="m.5 9 7.500-8 7.500 8" /></Svg></Push>
      <Push $x={26}>
        <Svg w={15} h={18} box="0 0 15 18" stroke="#fff" sw={1.400}><rect x="1" y="4.500" width="9" height="9" rx="2" /><path d="m10.500 8 3.500-2v6l-3.500-2M2.500 1.500q3-1.500 7 0M2.500 16.500q3 1.500 7 0" /></Svg>
      </Push>
      <Push $x={22}>
        <svg width="20" height="18" viewBox="0 0 20 18"><path d="M4 12q-4 0-4-3.500T4 5Q5 0 10 .5q3.500.5 4.500 4Q18 5 18 9q0 3-3 3z" fill="#b9bec5" /><path d="M4 12Q0 12 0 8.500T4 5l8 7z" fill="#8d949d" /><circle cx="14" cy="12.500" r="5.500" fill="#d9252b" /><path d="m12 10.500 4 4M16 10.500l-4 4" stroke="#fff" strokeWidth="1.500" /></svg>
      </Push>
      <Push $x={20}>
        <Svg w={20} h={15} box="0 0 20 15" stroke="#fff" sw={1.300}><path d="M5.500 4.500H18v9H4V8.500" /><path d="M6.500 6.500h9.500v5H6.500z" fill="#fff" /><path d="M19.500 7.500v3M1 1v2.500h4V1M3 3.500V7h2" /></Svg>
      </Push>
      <Push $x={22}>
        <Svg w={17} h={17} box="0 0 17 17" stroke="#c8ced8" sw={1.300}><path d="M1 15.500Q2 3 15.500 1.500M5 15.500Q5.500 6.500 15.500 5.500M9 15.500q.5-5.500 6.500-6" /><circle cx="14" cy="14.500" r="1.500" fill="#fff" stroke="none" /></Svg>
      </Push>
      <Push $x={21}>
        <Svg w={20} h={16} box="0 0 20 16" stroke="#fff" sw={1.300}><path d="M1 5.500h3L8.500 1.500v13L4 10.500H1z" /><path d="M11 6q1.500 2 0 4" /><path d="M13.500 3.500q3 4.500 0 9M16.500 1.500q4 6.500 0 13" stroke="#6f7a8d" /></Svg>
      </Push>
      <Push $x={25}>
        <Svg w={20} h={20} stroke="#fff" sw={1.300}><path d="M9 14.500 15.500 2.500q1.500-2 2.800-.8 1 1.200 0 2.800L10.500 16 8 17.500zM12.500 8.500q3-2.500 6.500-1.800M9.500 4.500Q3 8.500 1 14q-1 4.500 1.500 4.800T6.500 15q1-4-1.500-4.500" /></Svg>
      </Push>
      <Push $x={24}><Label $size={14.5} $ls={-0.4} $color="#fff">ENG</Label></Push>
      <Clock>
        <Label $size={14.5} $ls={-0.45} $color="#fff">01:28</Label>
        <Label $size={14.5} $ls={-0.1} $color="#fff">26/08/2023</Label>
      </Clock>
      <Notice>
        <Svg w={20} h={20} stroke="#1b2744" sw={1.500}><path d="M0 2h20v15H8l-4 3.500V17H0z" fill="#fff" stroke="none" /><path d="M4.500 6h11M4.500 9.500h11M4.500 13h6" /></Svg>
        <Count>25</Count>
      </Notice>
      <ShowDesktop />
    </Tray>
  </TaskBar>
);

export default function App() {
  return (
    <Screen>
      <GlobalStyle />
      <Tabs />
      <Address />
      <Bars />
      <Middle>
        <SidePanel />
        <WebPage />
        <ScrollTrack>
          <svg width="10" height="6" viewBox="0 0 10 6"><path d="M0 6h10L5 0z" fill="#505050" /></svg>
          <ScrollThumb />
          <svg width="10" height="6" viewBox="0 0 10 6"><path d="M0 0h10L5 6z" fill="#505050" /></svg>
        </ScrollTrack>
      </Middle>
      <Status />
      <Task />
    </Screen>
  );
}
